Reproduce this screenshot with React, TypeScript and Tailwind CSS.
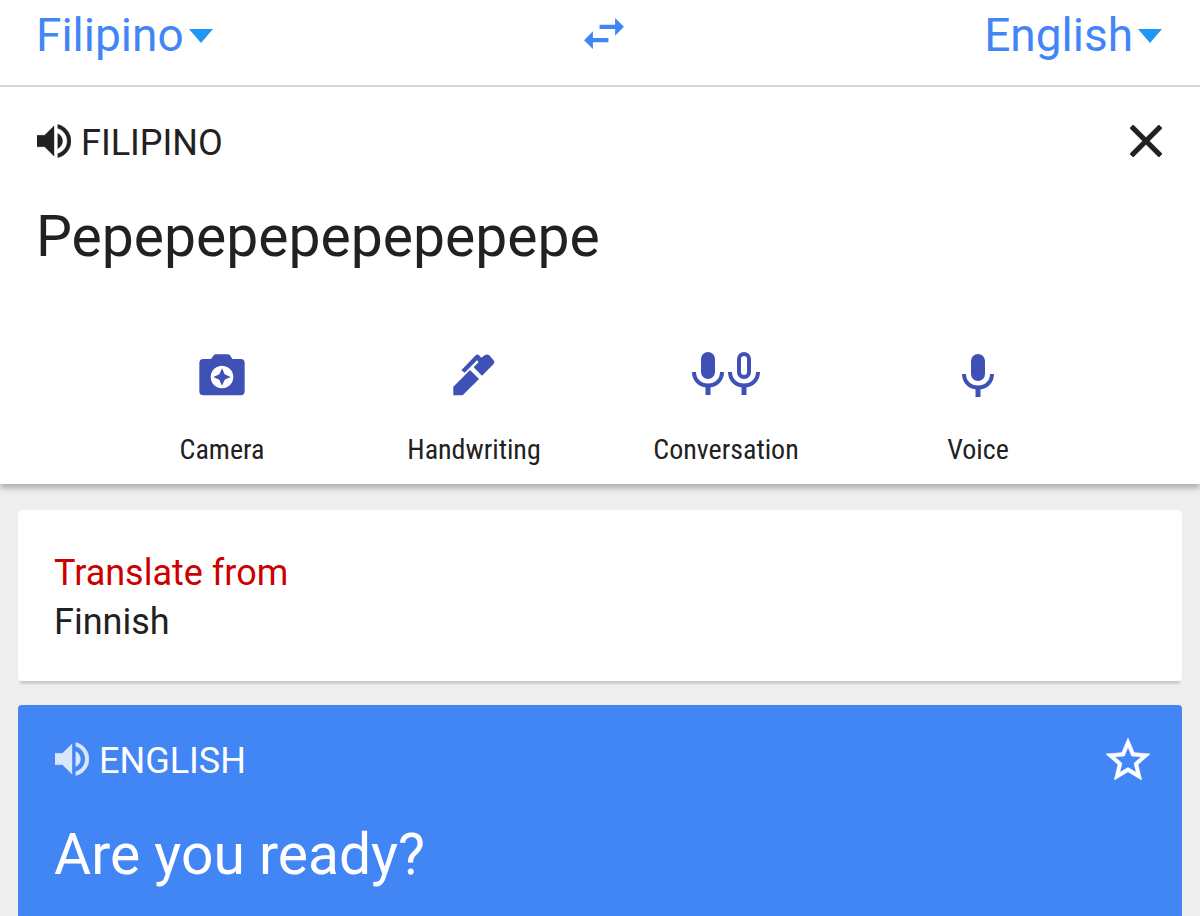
import React from 'react';

const VOLUME =
  'M3 9v6h4l5 5V4L7 9H3zm13.5 3c0-1.77-1.02-3.29-2.5-4.03v8.05c1.48-.73 2.5-2.25 2.5-4.02zM14 3.23v2.06c2.89.86 5 3.54 5 6.71s-2.11 5.85-5 6.71v2.06c4.01-.91 7-4.49 7-8.77s-2.99-7.86-7-8.77z';

function Listen({ label, iconColor }: { label: string; iconColor: string }) {
  return (
    <button className="flex items-center gap-2.5 pl-px text-4xl leading-[44px]">
      <svg
        viewBox="3 3 18 18"
        className={`h-[34px] w-[34px] shrink-0 ${iconColor}`}
        fill="currentColor"
        stroke="currentColor"
        strokeWidth="0.2"
        aria-hidden="true"
      >
        <path d={VOLUME} />
      </svg>
      <span className="pt-1">{label}</span>
    </button>
  );
}

function Caret() {
  return (
    <svg viewBox="0 0 24 14" className="h-3.5 w-6" fill="#2196f3" aria-hidden="true">
      <path d="M0 0h24L12 14z" />
    </svg>
  );
}

function Mic({ outlined = false }: { outlined?: boolean }) {
  return (
    <svg viewBox="0 -1 32 44" className="h-11 w-8" aria-hidden="true" fill="none" stroke="#3f51b5">
      {outlined ? (
        <rect x="11" y="2" width="10" height="23" rx="5" strokeWidth="4" />
      ) : (
        <rect x="9" y="0" width="14" height="27" rx="7" fill="#3f51b5" stroke="none" />
      )}
      <path d="M2 20C2 28 8 33.5 16 33.5S30 28 30 20" strokeWidth="4" />
      <path d="M16 34V43" strokeWidth="5" />
    </svg>
  );
}

function CameraIcon() {
  return (
    <svg viewBox="117 72 138 126" className="h-[42px] w-[46px]" fill="#3f51b5" aria-hidden="true">
      <path
        fillRule="evenodd"
        d="M168 73H203Q208 73 211 77L217 87H242Q254 87 254 99V184Q254 196 242 196H130Q118 196 118 184V99Q118 87 130 87H153L160 77Q163 73 168 73ZM186 107a34 34 0 1 0 .01 0ZM186 115L194 133L212 141L194 149L186 167L178 149L160 141L178 133Z"
      />
    </svg>
  );
}

function PenIcon() {
  return (
    <svg viewBox="879 72 126 126" className="h-[42px] w-[42px]" fill="#3f51b5" aria-hidden="true">
      <path d="M880 196V170L930 120L957 147L908 196Z" />
      <path d="M904 121L947 76Q952 71 957 76L964 83L974 76Q982 71 988 76L1000 90Q1006 96 1000 103L966 137L941 112L956 96L951 91L914 128Z" />
    </svg>
  );
}

const tools = [
  { label: 'Camera', icon: <CameraIcon /> },
  { label: 'Handwriting', icon: <PenIcon /> },
  {
    label: 'Conversation',
    icon: (
      <span className="flex gap-1 pb-1">
        <Mic />
        <Mic outlined />
      </span>
    ),
  },
  { label: 'Voice', icon: <Mic /> },
];

export default function App() {
  return (
    <div className="flex min-h-screen flex-col bg-[#eeeeee] font-['Roboto',sans-serif] text-[#212121]">
      <header className="relative z-10 flex h-[87px] items-start justify-between border-b-2 border-[#d6d6d6] bg-white pr-[38px] pl-9 text-[46px] text-[#4285f4]">
        <button className="flex h-[71px] flex-1 items-center gap-[5px]">
          Filipino
          <Caret />
        </button>
        <button className="ml-2.5 flex h-[66px] items-center" aria-label="Swap languages">
          <svg viewBox="3 5 18 14" className="h-[31px] w-10" fill="currentColor" aria-hidden="true">
            <path d="M6.99 11L3 15l3.99 4v-3H14v-2H6.99v-3zM21 9l-3.99-4v3H10v2h7.01v3L21 9z" />
          </svg>
        </button>
        <button className="flex h-[71px] flex-1 items-center justify-end gap-[5px]">
          English
          <Caret />
        </button>
      </header>

      <section className="bg-white pt-[30px] pb-4 shadow-[0_4px_6px_rgba(0,0,0,0.28)]">
        <div className="flex items-center justify-between pr-[38px] pl-9">
          <Listen label="FILIPINO" iconColor="text-[#212121]" />
          <button aria-label="Clear text">
            <svg viewBox="5 5 14 14" className="h-8 w-8" fill="#212121" stroke="#212121" strokeWidth="0.4" strokeLinejoin="round" aria-hidden="true">
              <path d="M19 6.41L17.59 5 12 10.59 6.41 5 5 6.41 10.59 12 5 17.59 6.41 19 12 13.41 17.59 19 19 17.59 13.41 12z" />
            </svg>
          </button>
        </div>
        <p className="px-9 pt-[38px] text-[57px] leading-[68px]">Pepepepepepepepepe</p>
        <nav className="mx-auto mt-20 grid max-w-[1008px] grid-cols-4">
          {tools.map((t) => (
            <button key={t.label} className="flex flex-col items-center gap-[33px]">
              <span className="flex h-12 items-center">{t.icon}</span>
              <span className="font-['Roboto_Condensed','Roboto',sans-serif] text-[28px] leading-9">{t.label}</span>
            </button>
          ))}
        </nav>
      </section>

      <main className="flex flex-1 flex-col px-[18px] pt-[26px]">
        <section className="rounded-[4px] bg-white px-9 pt-[39px] pb-[34px] text-4xl leading-[49px] shadow-[0_5px_2px_-2px_rgba(0,0,0,0.15)]">
          <a href="#finnish" className="block">
            <span className="block text-[#cc0000]">Translate from</span>
            <span className="block">Finnish</span>
          </a>
        </section>
        <section className="mt-6 flex-1 rounded-t-[4px] bg-[#4285f4] pr-8 pl-9 pt-[30px] text-white">
          <div className="flex items-center justify-between">
            <Listen label="ENGLISH" iconColor="text-[#d9e7fd]" />
            <button aria-label="Save translation">
              <svg viewBox="2 2 20 19" className="h-[42px] w-11" fill="currentColor" stroke="currentColor" strokeWidth="0.3" aria-hidden="true">
                <path d="M22 9.24l-7.19-.62L12 2 9.19 8.63 2 9.24l5.46 4.73L5.82 21 12 17.27 18.18 21l-1.63-7.03L22 9.24zM12 15.4l-3.76 2.27 1-4.28-3.32-2.88 4.38-.38L12 6.1l1.71 4.04 4.38.38-3.32 2.88 1 4.28L12 15.4z" />
              </svg>
            </button>
          </div>
          <p className="pt-[38px] text-[57px] leading-[68px]">Are you ready?</p>
        </section>
      </main>
    </div>
  );
}
